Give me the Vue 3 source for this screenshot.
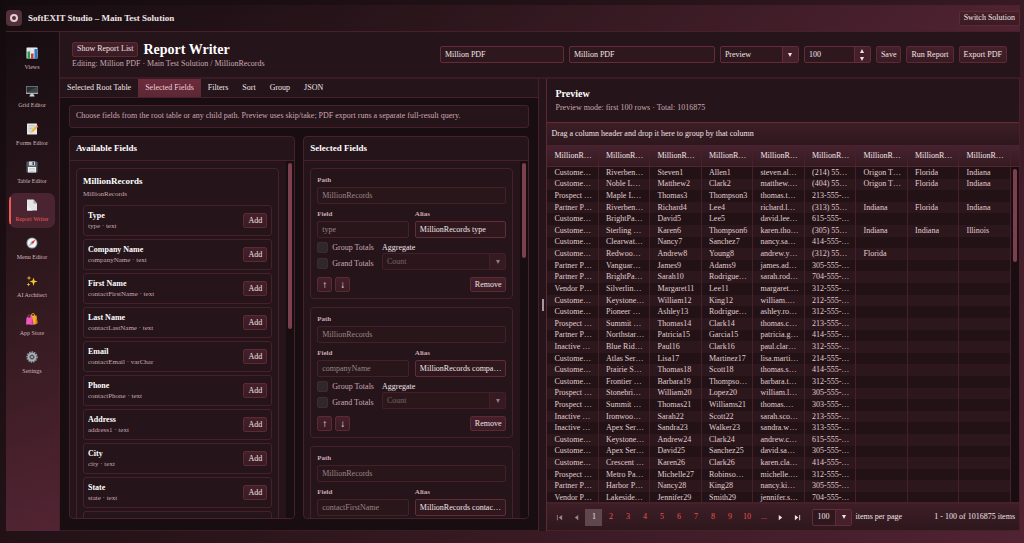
<template>
  <div class="studio">
    <header class="topbar">
      <div class="brand">
        <span class="logo"><span class="logo-ring"></span></span>
        <span class="brand-name">SoftEXIT Studio – Main Test Solution</span>
      </div>
      <button type="button" class="btn">Switch Solution</button>
    </header>

    <div class="shell">
      <nav class="sidebar">
        <a
          v-for="item in navItems"
          :key="item.id"
          href="#"
          class="nav-item"
          :class="{ active: item.id === activeNav }"
          @click.prevent="activeNav = item.id"
        >
          <svg class="nav-icon" viewBox="0 0 24 24" aria-hidden="true">
            <g v-if="item.id === 'views'">
              <rect x="1" y="1" width="22" height="22" rx="1" fill="#e9edf2" />
              <path d="M1 8h22M1 15h22M8 1v22M16 1v22" stroke="#c3ccd6" stroke-width="1" />
              <rect x="3" y="9" width="5" height="14" fill="#27a043" />
              <rect x="10" y="13" width="5" height="10" fill="#d9333b" />
              <rect x="17" y="4" width="5" height="19" fill="#2476d2" />
            </g>
            <g v-else-if="item.id === 'grid'">
              <rect x="0" y="2" width="24" height="16" rx="1" fill="#a9adb0" />
              <rect x="1" y="3" width="22" height="12" fill="#272d30" />
              <path d="M1 15 23 3v12z" fill="#3b4447" />
              <path d="M9 18h6l1 4H8z" fill="#c9cccf" />
              <rect x="7" y="21" width="10" height="2" fill="#e0e2e4" />
            </g>
            <g v-else-if="item.id === 'forms'">
              <rect x="2" y="1" width="20" height="22" rx="1" fill="#e8e8e6" />
              <path d="M5 5h13M5 8h13M5 11h9M5 14h6M5 17h4" stroke="#a3a7ab" stroke-width="1" />
              <path d="m9 20 2-5L20 6l3 3-9 9z" fill="#f0b429" />
              <path d="m20 6 2-2 3 3-2 2z" fill="#e0718a" />
              <path d="m9 20 2-5 3 3z" fill="#e9cfa4" />
            </g>
            <g v-else-if="item.id === 'tables'">
              <path d="M1 1h20l2 2v20H1z" fill="#56606a" />
              <rect x="6" y="1" width="12" height="8" fill="#cfd6db" />
              <rect x="13" y="2" width="3" height="6" fill="#414a52" />
              <rect x="4" y="12" width="16" height="11" fill="#f0f1f2" />
              <path d="M6 15h12M6 18h12M6 21h12" stroke="#a7b0b6" stroke-width="1" />
            </g>
            <g v-else-if="item.id === 'reports'">
              <path d="M2 1h13l7 8v14H2z" fill="#e3e4e3" />
              <path d="M15 1v8h7z" fill="#a5a8a8" />
              <path d="M2 23V12l11 11z" fill="#f1f1f0" />
            </g>
            <g v-else-if="item.id === 'menu'">
              <circle cx="12" cy="12" r="11" fill="#98a2a9" />
              <circle cx="12" cy="12" r="9" fill="#f1f3f4" />
              <path d="m19 5-5 9-4-4z" fill="#d93a40" />
              <path d="m5 19 5-9 4 4z" fill="#aeb8bf" />
              <circle cx="12" cy="12" r="1" fill="#444" />
            </g>
            <g v-else-if="item.id === 'ai'" fill="#f7c82d">
              <path d="m15 5 2 6 6 2-6 2-2 7-2-7-6-2 6-2z" />
              <path d="m6 1 1 4 4 1-4 1-1 4-1-4-4-1 4-1z" />
              <path d="m5 15 1 3 3 1-3 1-1 3-1-3-3-1 3-1z" />
            </g>
            <g v-else-if="item.id === 'store'">
              <path d="M11 7V4q0-3 3-3t3 3v3" fill="none" stroke="#d99213" stroke-width="2" />
              <path d="M9 5h12l2 15-5 3H9z" fill="#f4ae25" />
              <path d="m20 5 3 15-4 3z" fill="#c97d12" />
              <path d="M4 10V7q0-3 3-3t3 3v3" fill="none" stroke="#c13da0" stroke-width="2" />
              <path d="M1 9h12l2 14H0z" fill="#f158bd" />
              <path d="m12 9 3 14h-4z" fill="#c7379b" />
            </g>
            <g v-else>
              <circle cx="12" cy="12" r="10" fill="none" stroke="#8c989f" stroke-width="3" stroke-dasharray="3 2" />
              <circle cx="12" cy="12" r="7" fill="none" stroke="#a9b4ba" stroke-width="4" />
              <circle cx="12" cy="12" r="3" fill="#5a666e" />
              <path d="M12 4v16M4 12h16M6 6l12 12M18 6 6 18" stroke="#a9b4ba" stroke-width="1" />
            </g>
          </svg>
          <span>{{ item.label }}</span>
        </a>
      </nav>

      <main class="writer">
        <section class="writer-header">
          <div>
            <div class="title-row">
              <button type="button" class="btn">Show Report List</button>
              <h1>Report Writer</h1>
            </div>
            <p class="muted">Editing: Million PDF · Main Test Solution / MillionRecords</p>
          </div>
          <div class="actions">
            <input v-model="reportName" class="field name-field" type="text" aria-label="Report name" />
            <input v-model="reportTitle" class="field title-field" type="text" aria-label="Report title" />
            <div class="picker mode-picker">
              <select aria-label="Mode">
                <option>Preview</option>
              </select>
              <span class="picker-arrow"><i class="caret"></i></span>
            </div>
            <div class="picker count-picker">
              <input v-model="rowLimit" type="text" aria-label="Row limit" />
              <span class="picker-arrow"><i class="caret up"></i><i class="caret"></i></span>
            </div>
            <button type="button" class="btn tall">Save</button>
            <button type="button" class="btn tall">Run Report</button>
            <button type="button" class="btn tall">Export PDF</button>
          </div>
        </section>

        <div class="split">
          <section class="designer">
            <div class="tabs">
              <button
                v-for="tab in tabs"
                :key="tab"
                type="button"
                class="tab"
                :class="{ active: tab === activeTab }"
                @click="activeTab = tab"
              >{{ tab }}</button>
            </div>

            <div class="designer-body">
              <p class="note muted">Choose fields from the root table or any child path. Preview uses skip/take; PDF export runs a separate full-result query.</p>

              <div class="panels">
                <section class="panel">
                  <h2>Available Fields</h2>
                  <div class="panel-body">
                    <div class="panel-list">
                      <div class="card source">
                        <h3>MillionRecords</h3>
                        <p class="muted source-path">MillionRecords</p>
                        <div v-for="f in availableFields" :key="f.name" class="source-field">
                          <div>
                            <strong>{{ f.label }}</strong>
                            <small class="muted">{{ f.name }} · {{ f.type }}</small>
                          </div>
                          <button type="button" class="btn">Add</button>
                        </div>
                      </div>
                    </div>
                    <div class="scroll-track"><div class="thumb thumb-half"></div></div>
                  </div>
                </section>

                <section class="panel">
                  <h2>Selected Fields</h2>
                  <div class="panel-body">
                    <div class="panel-list">
                      <div v-for="f in selectedFields" :key="f.name" class="card selected">
                        <label class="stack">
                          <span>Path</span>
                          <input class="field" type="text" value="MillionRecords" disabled />
                        </label>
                        <div class="pair">
                          <label class="stack">
                            <span>Field</span>
                            <input class="field" type="text" :value="f.name" disabled />
                          </label>
                          <label class="stack">
                            <span>Alias</span>
                            <input v-model="f.alias" class="field" type="text" />
                          </label>
                        </div>
                        <div class="totals">
                          <div class="checks">
                            <label><input type="checkbox" />Group Totals</label>
                            <label><input type="checkbox" />Grand Totals</label>
                          </div>
                          <label class="aggregate">
                            <span>Aggregate</span>
                            <span class="picker disabled">
                              <select disabled>
                                <option>Count</option>
                              </select>
                              <span class="picker-arrow"><i class="caret"></i></span>
                            </span>
                          </label>
                        </div>
                        <div class="card-actions">
                          <button type="button" class="btn arrow" aria-label="Move up">↑</button>
                          <button type="button" class="btn arrow" aria-label="Move down">↓</button>
                          <button type="button" class="btn remove">Remove</button>
                        </div>
                      </div>
                    </div>
                    <div class="scroll-track"><div class="thumb thumb-short"></div></div>
                  </div>
                </section>
              </div>
            </div>
          </section>

          <div class="splitter"><span></span></div>

          <section class="preview">
            <div class="preview-header">
              <h2>Preview</h2>
              <p class="muted">Preview mode: first 100 rows · Total: 1016875</p>
            </div>
            <div class="group-bar">Drag a column header and drop it here to group by that column</div>
            <div class="grid-head">
              <table>
                <thead>
                  <tr><th v-for="n in 9" :key="n" scope="col">MillionR…</th></tr>
                </thead>
              </table>
            </div>
            <div class="grid-body">
              <div class="grid-rows">
                <table>
                  <tbody>
                    <tr v-for="(row, i) in rows" :key="i">
                      <td v-for="n in 9" :key="n">{{ row[n - 1] }}</td>
                    </tr>
                  </tbody>
                </table>
              </div>
              <div class="scroll-track"><div class="thumb thumb-grid"></div></div>
            </div>
            <footer class="pager">
              <button type="button" class="page nav" disabled aria-label="First page">
                <svg viewBox="0 0 8 8"><path d="M1 1h1v6H1zM7 1v6L3 4z" /></svg>
              </button>
              <button type="button" class="page nav" disabled aria-label="Previous page">
                <svg viewBox="0 0 8 8"><path d="M6 1v6L2 4z" /></svg>
              </button>
              <button
                v-for="p in pages"
                :key="p"
                type="button"
                class="page"
                :class="{ current: p === page }"
                @click="page = p"
              >{{ p }}</button>
              <button type="button" class="page nav" aria-label="Next page">
                <svg viewBox="0 0 8 8"><path d="M2 1v6l4-3z" /></svg>
              </button>
              <button type="button" class="page nav" aria-label="Last page">
                <svg viewBox="0 0 8 8"><path d="M6 1h1v6H6zM1 1v6l4-3z" /></svg>
              </button>
              <label class="page-size">
                <span class="picker">
                  <select>
                    <option>100</option>
                  </select>
                  <span class="picker-arrow"><i class="caret"></i></span>
                </span>
                items per page
              </label>
              <span class="page-info">1 - 100 of 1016875 items</span>
            </footer>
          </section>
        </div>
      </main>
    </div>
  </div>
</template>

<script setup>
import { ref } from 'vue'

const navItems = [
  { id: 'views', label: 'Views' },
  { id: 'grid', label: 'Grid Editor' },
  { id: 'forms', label: 'Forms Editor' },
  { id: 'tables', label: 'Table Editor' },
  { id: 'reports', label: 'Report Writer' },
  { id: 'menu', label: 'Menu Editor' },
  { id: 'ai', label: 'AI Architect' },
  { id: 'store', label: 'App Store' },
  { id: 'settings', label: 'Settings' },
]
const activeNav = ref('reports')

const reportName = ref('Million PDF')
const reportTitle = ref('Million PDF')
const rowLimit = ref('100')

const tabs = ['Selected Root Table', 'Selected Fields', 'Filters', 'Sort', 'Group', 'JSON']
const activeTab = ref('Selected Fields')

const availableFields = [
  { label: 'Type', name: 'type', type: 'text' },
  { label: 'Company Name', name: 'companyName', type: 'text' },
  { label: 'First Name', name: 'contactFirstName', type: 'text' },
  { label: 'Last Name', name: 'contactLastName', type: 'text' },
  { label: 'Email', name: 'contactEmail', type: 'varChar' },
  { label: 'Phone', name: 'contactPhone', type: 'text' },
  { label: 'Address', name: 'address1', type: 'text' },
  { label: 'City', name: 'city', type: 'text' },
  { label: 'State', name: 'state', type: 'text' },
  { label: 'Zip', name: 'zip', type: 'text' },
]

const selectedFields = ref([
  { name: 'type', alias: 'MillionRecords type' },
  { name: 'companyName', alias: 'MillionRecords compa…' },
  { name: 'contactFirstName', alias: 'MillionRecords contac…' },
])

const pages = ['1', '2', '3', '4', '5', '6', '7', '8', '9', '10', '...']
const page = ref('1')

const rows = [
  ['Custome…', 'Riverben…', 'Steven1', 'Allen1', 'steven.al…', '(214) 55…', 'Origon T…', 'Florida', 'Indiana'],
  ['Custome…', 'Noble L…', 'Matthew2', 'Clark2', 'matthew.…', '(404) 55…', 'Origon T…', 'Florida', 'Indiana'],
  ['Prospect …', 'Maple L…', 'Thomas3', 'Thompson3', 'thomas.t…', '213-555-…'],
  ['Partner P…', 'Riverben…', 'Richard4', 'Lee4', 'richard.l…', '(313) 55…', 'Indiana', 'Florida', 'Indiana'],
  ['Custome…', 'BrightPa…', 'David5', 'Lee5', 'david.lee…', '615-555-…'],
  ['Custome…', 'Sterling …', 'Karen6', 'Thompson6', 'karen.tho…', '(305) 55…', 'Indiana', 'Indiana', 'Illinois'],
  ['Custome…', 'Clearwat…', 'Nancy7', 'Sanchez7', 'nancy.sa…', '414-555-…'],
  ['Custome…', 'Redwoo…', 'Andrew8', 'Young8', 'andrew.y…', '(312) 55…', 'Florida'],
  ['Partner P…', 'Vanguar…', 'James9', 'Adams9', 'james.ad…', '305-555-…'],
  ['Partner P…', 'BrightPa…', 'Sarah10', 'Rodrigue…', 'sarah.rod…', '704-555-…'],
  ['Vendor P…', 'Silverlin…', 'Margaret11', 'Lee11', 'margaret.…', '312-555-…'],
  ['Custome…', 'Keystone…', 'William12', 'King12', 'william.…', '212-555-…'],
  ['Custome…', 'Pioneer …', 'Ashley13', 'Rodrigue…', 'ashley.ro…', '312-555-…'],
  ['Prospect …', 'Summit …', 'Thomas14', 'Clark14', 'thomas.c…', '213-555-…'],
  ['Partner P…', 'Northstar…', 'Patricia15', 'Garcia15', 'patricia.g…', '414-555-…'],
  ['Inactive …', 'Blue Rid…', 'Paul16', 'Clark16', 'paul.clar…', '312-555-…'],
  ['Custome…', 'Atlas Ser…', 'Lisa17', 'Martinez17', 'lisa.marti…', '214-555-…'],
  ['Custome…', 'Prairie S…', 'Thomas18', 'Scott18', 'thomas.s…', '414-555-…'],
  ['Custome…', 'Frontier …', 'Barbara19', 'Thompso…', 'barbara.t…', '312-555-…'],
  ['Prospect …', 'Stonebri…', 'William20', 'Lopez20', 'william.l…', '305-555-…'],
  ['Prospect …', 'Summit …', 'Thomas21', 'Williams21', 'thomas.…', '303-555-…'],
  ['Inactive …', 'Ironwoo…', 'Sarah22', 'Scott22', 'sarah.sco…', '213-555-…'],
  ['Inactive …', 'Apex Ser…', 'Sandra23', 'Walker23', 'sandra.w…', '313-555-…'],
  ['Custome…', 'Keystone…', 'Andrew24', 'Clark24', 'andrew.c…', '615-555-…'],
  ['Custome…', 'Apex Ser…', 'David25', 'Sanchez25', 'david.sa…', '305-555-…'],
  ['Custome…', 'Crescent …', 'Karen26', 'Clark26', 'karen.cla…', '414-555-…'],
  ['Prospect …', 'Metro Pa…', 'Michelle27', 'Robinso…', 'michelle.…', '312-555-…'],
  ['Partner P…', 'Harbor P…', 'Nancy28', 'King28', 'nancy.ki…', '305-555-…'],
  ['Vendor P…', 'Lakeside…', 'Jennifer29', 'Smith29', 'jennifer.s…', '704-555-…'],
]
</script>

<style>
body {
  background: #1d1015;
}
</style>

<style scoped>
.studio, .studio * { box-sizing: border-box; }

.studio {
  height: 100vh;
  display: flex;
  flex-direction: column;
  padding: 5px 4px 12px 6px;
  overflow: hidden;
  background: linear-gradient(135deg, #140b0f 0%, #241318 40%, #512332 100%);
  color: #f1e4e7;
  font-family: "Liberation Serif", "Times New Roman", serif;
  font-size: 8px;
  line-height: 10px;
}

h1, h2, h3, p { margin: 0; }
h1 { font-size: 14px; line-height: 17px; color: #fff; }
.muted { color: #cba8b1; }

button, input, select {
  font: inherit;
  color: inherit;
  margin: 0;
}

.btn {
  height: 15px;
  padding: 0 4px;
  border: 1px solid #5c2935;
  border-radius: 2px;
  background: linear-gradient(#45202a, #3a1b23);
  white-space: nowrap;
  flex-shrink: 0;
}
.btn.tall { height: 17px; }

/* top bar */
.topbar {
  display: flex;
  align-items: center;
  justify-content: space-between;
  flex: 0 0 27px;
  border-bottom: 1px solid #47202b;
  background: linear-gradient(135deg, #170d11, #2a151b 40%, #512332);
}
.brand { display: flex; align-items: center; gap: 6px; }
.brand-name { font-size: 9px; font-weight: 700; }
.logo {
  display: grid;
  place-items: center;
  width: 16px;
  height: 16px;
  border-radius: 4px;
  background: #54303a;
}
.logo-ring { width: 8px; height: 8px; border: 2px solid #e3cdd2; border-radius: 50%; }

.shell { display: flex; flex: 1; min-height: 0; }

/* sidebar */
.sidebar {
  flex: 0 0 54px;
  display: flex;
  flex-direction: column;
  gap: 3px;
  padding: 9px 4px 0 3px;
  border-right: 1px solid #47202b;
  background: linear-gradient(160deg, #160d11, #2f181e 50%, #532433);
}
.nav-item {
  display: flex;
  flex-direction: column;
  align-items: center;
  gap: 4px;
  height: 35px;
  padding-top: 6px;
  color: #d3b5bc;
  font-size: 6px;
  line-height: 8px;
  text-decoration: none;
  white-space: nowrap;
}
.nav-item.active {
  border-radius: 7px;
  background: linear-gradient(#ef5a52, #ef5a52) 0 4px / 2px 27px no-repeat #4a2430;
  color: #ef5a52;
}
.nav-icon { width: 12px; height: 12px; }

/* report header */
.writer { flex: 1; min-width: 0; display: flex; flex-direction: column; background: #25141a; }
.writer-header {
  display: flex;
  align-items: center;
  justify-content: space-between;
  flex: 0 0 47px;
  padding: 0 13px 0 12px;
  border-bottom: 2px solid #3a1c24;
}
.title-row { display: flex; align-items: center; gap: 5px; margin-bottom: 1px; }
.actions { display: flex; align-items: center; gap: 5px; }

.field {
  min-width: 0;
  height: 17px;
  padding: 0 4px;
  border: 1px solid #642b39;
  border-radius: 2px;
  background: #2f181d;
  text-overflow: ellipsis;
}
.field:disabled { color: #9b848a; border-color: #452029; background: #29161b; }
.name-field { width: 124px; }
.title-field { width: 146px; }

.picker {
  display: flex;
  height: 17px;
  border: 1px solid #642b39;
  border-radius: 2px;
  background: #2f181d;
  overflow: hidden;
}
.picker select, .picker input {
  flex: 1;
  min-width: 0;
  padding: 0 4px;
  border: 0;
  background: transparent;
  appearance: none;
}
.picker-arrow {
  flex: 0 0 16px;
  display: flex;
  flex-direction: column;
  align-items: center;
  justify-content: center;
  gap: 4px;
  border-left: 1px solid #642b39;
  background: #45202a;
}
.picker.disabled { opacity: 0.5; }
.caret {
  border: 2px solid transparent;
  border-top: 4px solid #f1e4e7;
  border-bottom: 0;
}
.caret.up { border-top: 0; border-bottom: 4px solid #f1e4e7; }
.mode-picker { width: 79px; }
.count-picker { width: 67px; }

.split { flex: 1; min-height: 0; display: flex; }

/* designer */
.designer { flex: 480 1 0; min-width: 0; display: flex; flex-direction: column; border-right: 1px solid #47202b; }
.tabs { display: flex; flex: 0 0 19px; border-bottom: 1px solid #47202b; }
.tab { padding: 0 7px; border: 0; background: transparent; }
.tab.active { background: linear-gradient(#6b2c3c, #5c2836); color: #f3cdd5; }
.designer-body {
  flex: 1;
  min-height: 0;
  display: flex;
  flex-direction: column;
  gap: 8px;
  padding: 7px 9px 11px;
  background: #180d11;
  border-bottom: 1px solid #3a1c24;
}
.note {
  flex: 0 0 23px;
  padding: 5px 6px;
  border: 1px solid #47202b;
  border-radius: 3px;
  background: #25141a;
  white-space: nowrap;
}
.panels { flex: 1; min-height: 0; display: grid; grid-template-columns: 1fr 1fr; gap: 8px; }
.panel {
  min-width: 0;
  min-height: 0;
  display: flex;
  flex-direction: column;
  border: 1px solid #47202b;
  border-radius: 4px;
  background: #25141a;
  overflow: hidden;
}
.panel h2 {
  flex: 0 0 24px;
  padding: 6px;
  border-bottom: 1px solid #47202b;
  font-size: 9px;
  line-height: 10px;
  color: #fff;
}
.panel-body { flex: 1; min-height: 0; display: flex; }
.panel-list { flex: 1; min-width: 0; padding: 7px 7px 0 6px; overflow: hidden; }
.scroll-track { flex: 0 0 8px; padding: 2px; background: #180d11; }
.thumb { border-radius: 2px; background: #7b3f4d; }
.thumb-half { height: 47%; }
.thumb-short { height: 27%; }
.thumb-grid { height: 28%; }

.card { border: 1px solid #47202b; border-radius: 4px; }
.source { padding: 7px 6px 0; }
.source h3 { font-size: 9px; line-height: 11px; color: #fff; }
.source-path { font-size: 7px; line-height: 14px; margin-bottom: 4px; }
.source-field {
  display: flex;
  align-items: center;
  justify-content: space-between;
  height: 31px;
  margin-bottom: 3px;
  padding: 0 4px;
  border: 1px solid #47202b;
  border-radius: 3px;
}
.source-field strong { display: block; color: #fff; }
.source-field small { display: block; font-size: 7px; }

.selected { height: 131px; margin-bottom: 8px; padding: 5px 6px 0; }
.stack { display: flex; flex-direction: column; min-width: 0; }
.stack span { font-size: 7px; font-weight: 700; line-height: 13px; color: #cba8b1; }
.pair { display: grid; grid-template-columns: 1fr 1fr; gap: 6px; margin-top: 4px; }
.totals { display: flex; gap: 8px; margin-top: 4px; }
.checks { flex: 0 0 56px; display: flex; flex-direction: column; gap: 5px; color: #cba8b1; }
.checks label { display: flex; align-items: center; gap: 4px; height: 11px; white-space: nowrap; }
.checks input {
  width: 11px;
  height: 11px;
  border: 1px solid #3d2b30;
  border-radius: 2px;
  background: #30272a;
  appearance: none;
}
.checks input:checked { background: #ef5a52; }
.aggregate { flex: 1; }
.aggregate > span:first-child { display: block; line-height: 11px; }
.card-actions { display: flex; gap: 3px; margin-top: 7px; }
.arrow { width: 15px; padding: 0; font-size: 10px; }
.remove { margin-left: auto; }

.splitter { flex: 0 0 7px; display: grid; place-items: center; }
.splitter span { width: 2px; height: 12px; background: #a3979b; }

/* preview grid */
.preview { flex: 473 1 0; min-width: 0; display: flex; flex-direction: column; border-left: 1px solid #5c2935; border-right: 1px solid #47202b; }
.preview-header { flex: 0 0 43px; padding: 8px; }
.preview-header h2 { font-size: 10px; line-height: 13px; margin-bottom: 3px; color: #fff; }
.group-bar {
  flex: 0 0 23px;
  padding: 6px 4px;
  border-top: 1px solid #642b39;
  background: linear-gradient(#3d1e26, #2e171d);
}
.grid-head { flex: 0 0 22px; padding-right: 8px; border-bottom: 1px solid #55252f; background: linear-gradient(#482330, #351a21); }
table { width: 100%; border-collapse: separate; border-spacing: 0; table-layout: fixed; }
th, td {
  padding: 0 0 0 7px;
  border-right: 1px solid #47202b;
  font-weight: 400;
  text-align: left;
  white-space: nowrap;
  overflow: hidden;
}
th { height: 21px; }
.grid-body { flex: 1; min-height: 0; display: flex; background: #221216; }
.grid-rows { flex: 1; min-width: 0; overflow: hidden; }
/* the last row runs a little under the pager */
.grid-rows table { height: calc(100% + 2px); color: #e0cdd1; }
tbody tr:nth-child(even) { background: #2c171c; }

.pager {
  flex: 0 0 29px;
  display: flex;
  align-items: center;
  padding: 0 4px;
  border-top: 2px solid #47202b;
  border-bottom: 1px solid #47202b;
  background: linear-gradient(#3d1e26, #2e171d);
}
.page {
  flex: 0 1 17px;
  height: 17px;
  padding: 0;
  border: 0;
  background: transparent;
  color: #ea544d;
}
.page.current { background: #5f474d; color: #f1e4e7; }
.page.nav { color: #f1e4e7; }
.page.nav:disabled { color: #9b848a; }
.page svg { width: 7px; height: 7px; fill: currentColor; vertical-align: middle; }
.page-size { display: flex; align-items: center; gap: 3px; margin-left: 6px; white-space: nowrap; }
.page-size .picker { width: 40px; }
.page-info { margin-left: auto; white-space: nowrap; }
</style>
